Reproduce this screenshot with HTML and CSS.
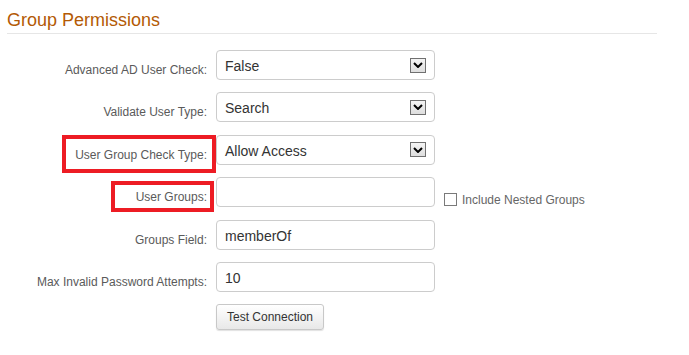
FILE: index.html
```html
<!DOCTYPE html>
<html>
<head>
<meta charset="utf-8">
<link rel="stylesheet" href="styles.css">
</head>
<body>
<div class="page">
  <h2 class="title">Group Permissions</h2>
  <div class="form">
    <div class="row">
      <label class="lbl">Advanced AD User Check:</label>
      <div class="field select"><span class="val">False</span><span class="arrow"><svg width="10" height="6" viewBox="0 0 10 6"><path d="M1 1 L5 5 L9 1" fill="none" stroke="#000" stroke-width="2"/></svg></span></div>
    </div>
    <div class="row">
      <label class="lbl">Validate User Type:</label>
      <div class="field select"><span class="val">Search</span><span class="arrow"><svg width="10" height="6" viewBox="0 0 10 6"><path d="M1 1 L5 5 L9 1" fill="none" stroke="#000" stroke-width="2"/></svg></span></div>
    </div>
    <div class="row">
      <label class="lbl"><span class="mark mark1"></span>User Group Check Type:</label>
      <div class="field select"><span class="val">Allow Access</span><span class="arrow"><svg width="10" height="6" viewBox="0 0 10 6"><path d="M1 1 L5 5 L9 1" fill="none" stroke="#000" stroke-width="2"/></svg></span></div>
    </div>
    <div class="row">
      <label class="lbl"><span class="mark mark2"></span>User Groups:</label>
      <div class="field"><span class="val"></span></div>
      <div class="check"><span class="box"></span><span class="ctext">Include Nested Groups</span></div>
    </div>
    <div class="row">
      <label class="lbl">Groups Field:</label>
      <div class="field"><span class="val">memberOf</span></div>
    </div>
    <div class="row">
      <label class="lbl">Max Invalid Password Attempts:</label>
      <div class="field"><span class="val">10</span></div>
    </div>
    <div class="row btnrow">
      <span class="lbl"></span>
      <button class="btn">Test Connection</button>
    </div>
  </div>
</div>
</body>
</html>
```

FILE: styles.css
```css
html, body {
  margin: 0;
  padding: 0;
  background: #fff;
  font-family: "Liberation Sans", Arial, sans-serif;
}
.page {
  width: 689px;
  height: 355px;
  overflow: hidden;
}
.title {
  margin: 10px 0 0 7px;
  width: 650px;
  font-size: 18px;
  line-height: 20px;
  font-weight: normal;
  color: #b35a05;
  padding-bottom: 3px;
  border-bottom: 1px solid #e6e6e6;
}
.form {
  margin-top: 16px;
}
.row {
  display: flex;
  height: 30px;
  margin-bottom: 12.4px;
}
.lbl {
  position: relative;
  box-sizing: border-box;
  width: 207px;
  padding-top: 13px;
  margin-right: 9px;
  text-align: right;
  font-size: 12px;
  line-height: 14px;
  color: #5a5a5a;
}
.field {
  box-sizing: border-box;
  width: 219px;
  height: 30px;
  border: 1px solid #cccccc;
  border-radius: 4px;
  padding: 2px 8px 0 8px;
  display: flex;
  align-items: center;
  font-size: 14px;
  color: #333;
}
.select .val {
  flex: 1;
}
.arrow {
  box-sizing: border-box;
  width: 16px;
  height: 15px;
  margin-top: -2px;
  border: 1px solid #707070;
  background: linear-gradient(#f4f4f4, #dedede);
  display: flex;
  align-items: center;
  justify-content: center;
}
.arrow svg {
  display: block;
}
.check {
  display: flex;
  align-items: center;
  margin-left: 9px;
  padding-top: 15px;
}
.box {
  box-sizing: border-box;
  width: 13px;
  height: 13px;
  border: 1px solid #7a7a7a;
  background: #fff;
}
.ctext {
  margin-left: 5px;
  font-size: 12px;
  color: #666;
}
.mark {
  position: absolute;
  box-sizing: border-box;
  border: 4px solid #ed1c24;
}
.mark1 {
  left: 62px;
  top: 0;
  width: 154px;
  height: 38px;
}
.mark2 {
  left: 111px;
  top: 4px;
  width: 103px;
  height: 31px;
}
.btnrow {
  height: 26px;
}
.btn {
  box-sizing: border-box;
  width: 108px;
  height: 26px;
  padding: 0;
  border: 1px solid #c8c8c8;
  border-radius: 3px;
  background: linear-gradient(#ffffff, #e8e8e8);
  box-shadow: 0 1px 1px rgba(0,0,0,0.12);
  font-family: "Liberation Sans", Arial, sans-serif;
  font-size: 12px;
  color: #333;
}
```
